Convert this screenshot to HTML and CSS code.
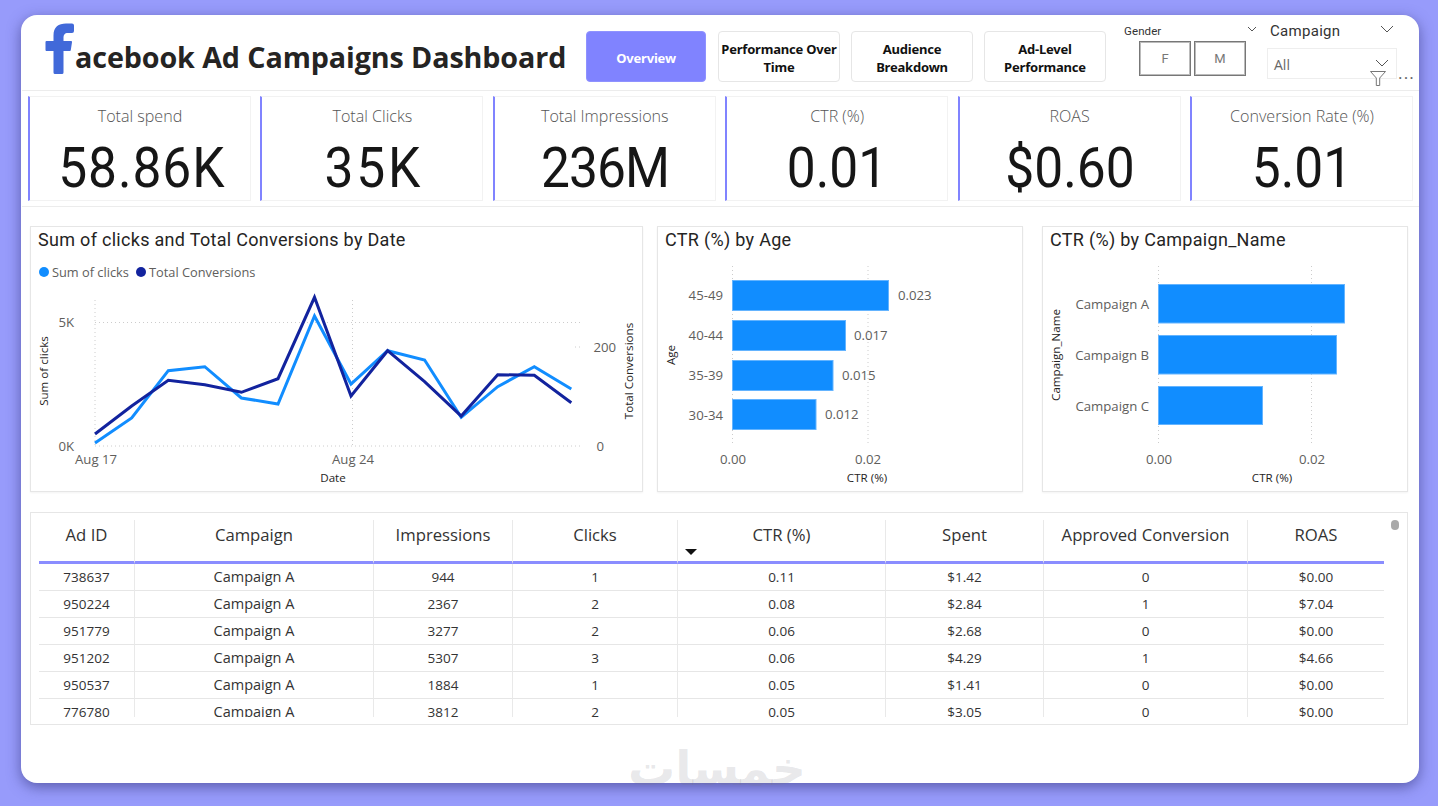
FILE: index.html
```html
<!DOCTYPE html>
<html lang="en">
<head>
<meta charset="utf-8">
<title>Facebook Ad Campaigns Dashboard</title>
<link rel="stylesheet" href="styles.css">
</head>
<body>
<main class="dash">
  <header class="top">
    <div class="brand">
      <svg class="logo" viewBox="0 0 30 51" aria-hidden="true"><path d="M8.5 49.5V28H1.5a1 1 0 0 1-1-1V19a1 1 0 0 1 1-1H8.5V12.500C8.500 4 13.500 0.500 21 0.500H27a2 2 0 0 1 2 2V8a2 2 0 0 1-2 2H23C19.500 10 18.500 12 18.500 15V18H26a1 1 0 0 1 1 1.200L25.800 27a1 1 0 0 1-1 1H18.500V49.500a1.500 1.500 0 0 1-1.500 1.500H10a1.500 1.500 0 0 1-1.500-1.500Z"/></svg>
      <h1 class="title">acebook Ad Campaigns Dashboard</h1>
    </div>
    <nav class="nav">
      <a class="btn btn-on">Overview</a>
      <a class="btn">Performance Over Time</a>
      <a class="btn">Audience Breakdown</a>
      <a class="btn">Ad-Level Performance</a>
    </nav>
    <div class="slicer gender">
      <div class="slicer-head"><span class="gender-label">Gender</span><svg class="chev chev-s" viewBox="0 0 10 6"><path d="M1 1l4 4 4-4"/></svg></div>
      <div class="gender-opts"><span class="opt">F</span><span class="opt">M</span></div>
    </div>
    <div class="slicer campaign">
      <div class="slicer-head camp-head"><span class="camp-label">Campaign</span><svg class="chev chev-m" viewBox="0 0 14 8"><path d="M1 1l6 6 6-6"/></svg></div>
      <div class="drop"><span>All</span><svg class="chev chev-m" viewBox="0 0 14 8"><path d="M1 1l6 6 6-6"/></svg></div>
    </div>
    <svg class="funnel" viewBox="0 0 16 15" aria-hidden="true"><path d="M0.500 0.500H15.500L9.700 7V14.500H6.300V7Z"/></svg>
    <span class="more">...</span>
  </header>

  <section class="kpis">
    <div class="kpi"><div class="kpi-label">Total spend</div><div class="kpi-value spread">58.86K</div></div>
    <div class="kpi"><div class="kpi-label">Total Clicks</div><div class="kpi-value wide">35K</div></div>
    <div class="kpi"><div class="kpi-label">Total Impressions</div><div class="kpi-value tight">236M</div></div>
    <div class="kpi"><div class="kpi-label">CTR (%)</div><div class="kpi-value">0.01</div></div>
    <div class="kpi"><div class="kpi-label">ROAS</div><div class="kpi-value">$0.60</div></div>
    <div class="kpi"><div class="kpi-label">Conversion Rate (%)</div><div class="kpi-value">5.01</div></div>
  </section>

  <section class="charts">
    <article class="card card-line">
      <h2 class="card-title">Sum of clicks and Total Conversions by Date</h2>
      <svg class="plot" viewBox="31 260 611 230">
        <circle class="c-light" cx="44" cy="272" r="5"/><text class="t-legend" x="52" y="277">Sum of clicks</text>
        <circle class="c-dark" cx="141" cy="272" r="5"/><text class="t-legend" x="149" y="277">Total Conversions</text>
        <path class="grid" d="M95 322.500H582M95 446H582M95 300V446M352.500 300V446M575 347H583"/>
        <polyline class="ln ln-light" points="95,443 131.700,418 168.300,370.700 204.800,366.700 241.400,398 278,404 314.500,316 351,384 387.600,350.700 424.600,360 461.200,417.300 497.700,386.700 534.300,366.700 571.300,389"/>
        <polyline class="ln ln-dark" points="95,434 131.700,406 168.300,380.300 204.800,384.700 241.400,392.300 278,378.700 314.500,297.300 351,396 387.600,350.700 424.600,381.700 461.200,416 497.700,374.700 534.300,375.300 571.300,402.700"/>
        <text class="t-tick end" x="74" y="327">5K</text>
        <text class="t-tick end" x="74" y="451">0K</text>
        <text class="t-tick end" x="616" y="352">200</text>
        <text class="t-tick end" x="604" y="451">0</text>
        <text class="t-tick mid" x="96" y="464">Aug 17</text>
        <text class="t-tick mid" x="353" y="464">Aug 24</text>
        <text class="t-axis mid" x="333" y="482">Date</text>
        <text class="t-axis mid" transform="translate(48 371) rotate(-90)">Sum of clicks</text>
        <text class="t-axis mid" transform="translate(633 371) rotate(-90)">Total Conversions</text>
      </svg>
    </article>
    <article class="card card-bar">
      <h2 class="card-title">CTR (%) by Age</h2>
      <svg class="plot" viewBox="658 260 364 230">
        <path class="grid" d="M732.500 266V443M868 266V443"/>
        <rect class="bar" x="732.500" y="280.500" width="156" height="30"/>
        <rect class="bar" x="732.500" y="320.500" width="113" height="30"/>
        <rect class="bar" x="732.500" y="360.500" width="100.500" height="30"/>
        <rect class="bar" x="732.500" y="399.500" width="83.500" height="30"/>
        <text class="t-tick end" x="723" y="300">45-49</text>
        <text class="t-tick end" x="723" y="340">40-44</text>
        <text class="t-tick end" x="723" y="380">35-39</text>
        <text class="t-tick end" x="723" y="420">30-34</text>
        <text class="t-tick" x="898" y="300">0.023</text>
        <text class="t-tick" x="854" y="340">0.017</text>
        <text class="t-tick" x="842" y="380">0.015</text>
        <text class="t-tick" x="825" y="419">0.012</text>
        <text class="t-tick mid" x="733" y="464">0.00</text>
        <text class="t-tick mid" x="868" y="464">0.02</text>
        <text class="t-axis mid" x="867" y="482">CTR (%)</text>
        <text class="t-axis mid" transform="translate(675 355) rotate(-90)">Age</text>
      </svg>
    </article>
    <article class="card card-bar card-last">
      <h2 class="card-title">CTR (%) by Campaign_Name</h2>
      <svg class="plot" viewBox="1043 260 364 230">
        <path class="grid" d="M1158.500 266V443M1311.500 266V443"/>
        <rect class="bar" x="1158.500" y="284.500" width="186" height="38.500"/>
        <rect class="bar" x="1158.500" y="335.500" width="178" height="38.500"/>
        <rect class="bar" x="1158.500" y="386.500" width="104" height="38"/>
        <text class="t-tick end" x="1149" y="309">Campaign A</text>
        <text class="t-tick end" x="1149" y="360">Campaign B</text>
        <text class="t-tick end" x="1149" y="411">Campaign C</text>
        <text class="t-tick mid" x="1159" y="464">0.00</text>
        <text class="t-tick mid" x="1312" y="464">0.02</text>
        <text class="t-axis mid" x="1272" y="482">CTR (%)</text>
        <text class="t-axis mid" transform="translate(1060 355) rotate(-90)">Campaign_Name</text>
      </svg>
    </article>
  </section>

  <section class="table-card">
    <div class="table-clip">
      <table class="tbl">
        <colgroup>
          <col class="col-a"><col class="col-b"><col class="col-c"><col class="col-d"><col class="col-e"><col class="col-f"><col class="col-g"><col class="col-h">
        </colgroup>
        <thead>
          <tr><th>Ad ID</th><th>Campaign</th><th>Impressions</th><th>Clicks</th><th class="sorted">CTR (%)<span class="sort"></span></th><th>Spent</th><th>Approved Conversion</th><th>ROAS</th></tr>
        </thead>
        <tbody>
          <tr><td>738637</td><td class="name">Campaign A</td><td>944</td><td>1</td><td>0.11</td><td>$1.42</td><td>0</td><td>$0.00</td></tr>
          <tr><td>950224</td><td class="name">Campaign A</td><td>2367</td><td>2</td><td>0.08</td><td>$2.84</td><td>1</td><td>$7.04</td></tr>
          <tr><td>951779</td><td class="name">Campaign A</td><td>3277</td><td>2</td><td>0.06</td><td>$2.68</td><td>0</td><td>$0.00</td></tr>
          <tr><td>951202</td><td class="name">Campaign A</td><td>5307</td><td>3</td><td>0.06</td><td>$4.29</td><td>1</td><td>$4.66</td></tr>
          <tr><td>950537</td><td class="name">Campaign A</td><td>1884</td><td>1</td><td>0.05</td><td>$1.41</td><td>0</td><td>$0.00</td></tr>
          <tr><td>776780</td><td class="name">Campaign A</td><td>3812</td><td>2</td><td>0.05</td><td>$3.05</td><td>0</td><td>$0.00</td></tr>
        </tbody>
      </table>
    </div>
    <span class="thumb"></span>
  </section>
  <div class="watermark" lang="ar" dir="rtl">خمسات</div>
</main>
</body>
</html>
```
FILE: styles.css
```css
* { box-sizing: border-box; }
html, body { margin: 0; height: 100%; }
body {
  background: #979bfb;
  padding: 15px 19px 23px 21px;
  overflow: hidden;
  font-family: "Open Sans", "Noto Sans", sans-serif;
  color: #252423;
}
.dash {
  position: relative;
  height: 768px;
  background: #fff;
  border-radius: 16px;
  box-shadow: 0 4px 14px rgba(50, 50, 120, .6);
}

/* header */
.top { position: relative; display: flex; height: 75px; }
.brand { display: flex; width: 565px; padding-left: 24px; }
.logo { width: 30px; height: 51px; margin-top: 8px; flex: none; fill: #4169d9; }
.title {
  margin: 21px 0 0;
  font-size: 28.700px;
  line-height: 42px;
  font-weight: 700;
  white-space: nowrap;
  color: #252423;
  letter-spacing: -.1px;
}
.nav { display: flex; gap: 11px; margin-top: 16px; height: 51px; width: 538px; }
.btn {
  width: 122px;
  display: flex;
  align-items: center;
  justify-content: center;
  text-align: center;
  font-size: 13px;
  line-height: 18px;
  font-weight: 700;
  color: #111;
  border: 1px solid #e6e6e6;
  border-radius: 4px;
  padding: 2px 2px 0;
  font-family: "Noto Sans", sans-serif;
  letter-spacing: -.2px;
}
.btn-on { width: 120px; margin-right: 1px; background: #8083ff; border-color: #8f92ff; color: #fff; }
.slicer-head { display: flex; justify-content: space-between; align-items: center; }
.gender { width: 133px; padding-top: 8px; }
.gender-label { font: 400 11.500px/16px Roboto, sans-serif; color: #333; letter-spacing: .1px; }
.gender-opts { display: flex; gap: 3px; margin: 2px 0 0 15px; }
.opt {
  width: 52px;
  height: 35px;
  border: 1px solid #777;
  box-shadow: inset 0 0 0 1px #bbb;
  display: flex;
  align-items: center;
  justify-content: center;
  font: 400 13px Roboto, sans-serif;
  color: #777;
}
.campaign { margin-left: 10px; width: 130px; padding-top: 6px; }
.camp-head { padding: 0 3px; }
.camp-label { font: 400 15px/20px Roboto, sans-serif; color: #333; letter-spacing: .3px; }
.drop {
  display: flex;
  align-items: center;
  justify-content: space-between;
  height: 31px;
  margin-top: 7px;
  border: 1px solid #eee;
  padding: 2px 7px 0 6px;
  font-size: 14px;
  color: #666;
}
.chev { fill: none; stroke: #555; stroke-width: 1; }
.chev-s { width: 10px; height: 6px; margin-top: -4px; }
.chev-m { width: 14px; height: 8px; margin-top: -4px; }
.funnel { position: absolute; left: 1349px; top: 56px; width: 16px; height: 15px; fill: #fff; stroke: #777; }
.more { position: absolute; left: 1377px; top: 49px; font: 400 17px/18px "Open Sans", sans-serif; color: #666; letter-spacing: 1.200px; }

/* KPI row */
.kpis {
  display: grid;
  grid-template-columns: repeat(6, 223px);
  justify-content: space-between;
  height: 117px;
  padding: 5px 6px 5px 6px;
  border-top: 1px solid #ececec;
  border-bottom: 1px solid #ececec;
  margin-left: 1px;
}
.kpi {
  border: 1px solid #f2f2f2;
  border-left: 2px solid #8083ff;
  text-align: center;
}
.kpi-label { margin-top: 7px; font-size: 16.100px; line-height: 24px; font-weight: 300; color: #555; }
.kpi-value {
  margin-top: 10px;
  font: 400 56px/60px Roboto, sans-serif;
  color: #161616;
  transform: scaleX(.92);
}
.wide { letter-spacing: 3px; padding-left: 4px; }
.spread { letter-spacing: 1px; padding-left: 4px; }
.tight { letter-spacing: -1px; }

/* charts */
.charts { display: flex; margin: 19px 11px 0 9px; gap: 14px; height: 266px; }
.card { border: 1px solid #e6e6e6; box-shadow: 0 1px 2px rgba(0,0,0,.05); }
.card-line { width: 613px; }
.card-bar { width: 366px; }
.card-last { margin-left: 5px; }
.card-title {
  margin: 0;
  height: 33px;
  padding: 1px 0 0 7px;
  font: 400 18px/24px Roboto, sans-serif;
  letter-spacing: .3px;
  color: #252423;
}
.plot { display: block; width: 100%; height: 230px; }
.plot text { font-family: "Open Sans", sans-serif; }
.grid { fill: none; stroke: #ccc; stroke-width: 1; stroke-dasharray: 1 3; }
.ln { fill: none; stroke-width: 3; stroke-linejoin: miter; }
.ln-light { stroke: #118dff; }
.ln-dark { stroke: #12239e; }
.c-light { fill: #118dff; }
.c-dark { fill: #12239e; }
.bar { fill: #118dff; stroke: #64b4ff; stroke-width: 1; }
.plot .t-legend { font-size: 12.800px; fill: #605e5c; }
.plot .t-tick { font-size: 13.200px; fill: #605e5c; }
.plot .t-axis { font-size: 11.600px; fill: #252423; }
.end { text-anchor: end; }
.mid { text-anchor: middle; }

/* table */
.table-card {
  position: relative;
  margin: 20px 11px 0 9px;
  height: 213px;
  border: 1px solid #e6e6e6;
  padding: 7px 23px 0 8px;
}
.table-clip { height: 197px; overflow: hidden; }
.tbl { width: 1345px; table-layout: fixed; border-collapse: separate; border-spacing: 0; }
.col-a { width: 96px; } .col-b { width: 239px; } .col-c { width: 139px; } .col-d { width: 165px; }
.col-e { width: 208px; } .col-f { width: 158px; } .col-g { width: 204px; } .col-h { width: 136px; }
.tbl th {
  height: 44px;
  padding: 2px 0 0;
  vertical-align: top;
  font-weight: 400;
  font-size: 16.700px;
  line-height: 26px;
  color: #333;
  border-bottom: 3px solid #8a8dff;
  border-right: 1px solid #e9e9e9;
  white-space: nowrap;
}
.tbl td {
  height: 27px;
  padding: 0;
  text-align: center;
  font-size: 13.500px;
  line-height: 24px;
  color: #333;
  border-bottom: 1px solid #e6e6e6;
  border-right: 1px solid #e9e9e9;
}
.tbl td.name { font-size: 14.500px; }
.tbl th:last-child, .tbl td:last-child { border-right: 0; }
.sorted { position: relative; }
.sort {
  position: absolute;
  left: 7px;
  bottom: 6px;
  border-left: 6px solid transparent;
  border-right: 6px solid transparent;
  border-top: 6px solid #111;
}
.thumb { position: absolute; right: 8px; top: 7px; width: 8px; height: 10px; border-radius: 4px; background: #a9a9a9; }

/* watermark */
.watermark {
  position: absolute;
  left: 611px;
  top: 726px;
  width: 174px;
  text-align: center;
  font: 700 47px/56px "DejaVu Sans", sans-serif;
  color: rgba(120, 120, 130, .18);
  white-space: nowrap;
}
```
